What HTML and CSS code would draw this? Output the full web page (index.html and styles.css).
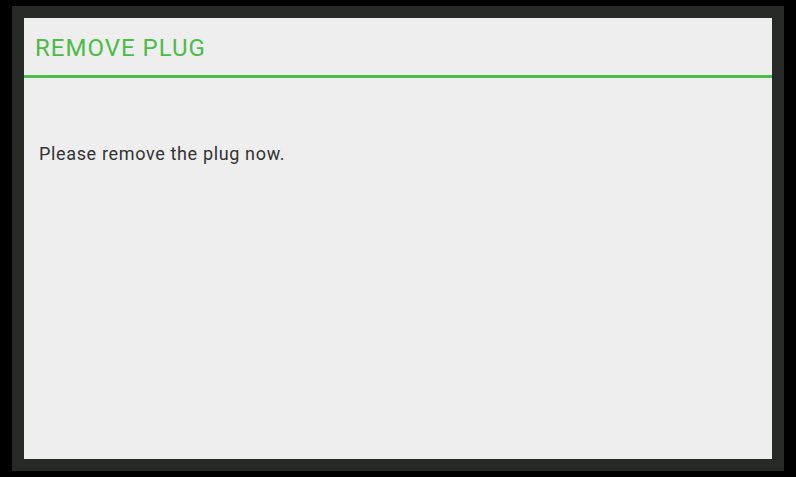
FILE: index.html
```html
<!DOCTYPE html>
<html lang="en">
<head>
    <meta charset="UTF-8">
    <title>Remove Plug</title>
    <link rel="stylesheet" href="styles.css">
</head>
<body>

    <!-- Device frame -->
    <div class="frame">
        <div class="dialog">
            <div class="dialog-title">REMOVE PLUG</div>
            <div class="dialog-body">
                <p>Please remove the plug now.</p>
            </div>
        </div>
    </div>

</body>
</html>
```

FILE: styles.css
```css
html, body {
    margin: 0;
    height: 100%;
}

body {
    background-color: #000;
    font-family: Roboto, "Liberation Sans", sans-serif;
    padding: 6px 12px;
    box-sizing: border-box;
}

/* Dark border round the dialog */
.frame {
    background-color: #262926;
    padding: 12px;
    height: 465px;
    box-sizing: border-box;
    display: flex;
}

.dialog {
    flex: 1;
    background-color: #eeeeee;
    display: flex;
    flex-direction: column;
}

.dialog-title {
    color: #4cbb47;
    font-size: 24px;
    letter-spacing: 1px;
    height: 57px;
    line-height: 60px;
    padding-left: 11px;
    border-bottom: 3px solid #4cbb47;
}

.dialog-body {
    padding: 0 15px;
}

.dialog-body p {
    margin: 65px 0 0;
    color: #333;
    font-size: 18px;
    letter-spacing: 0.65px;
}
```
